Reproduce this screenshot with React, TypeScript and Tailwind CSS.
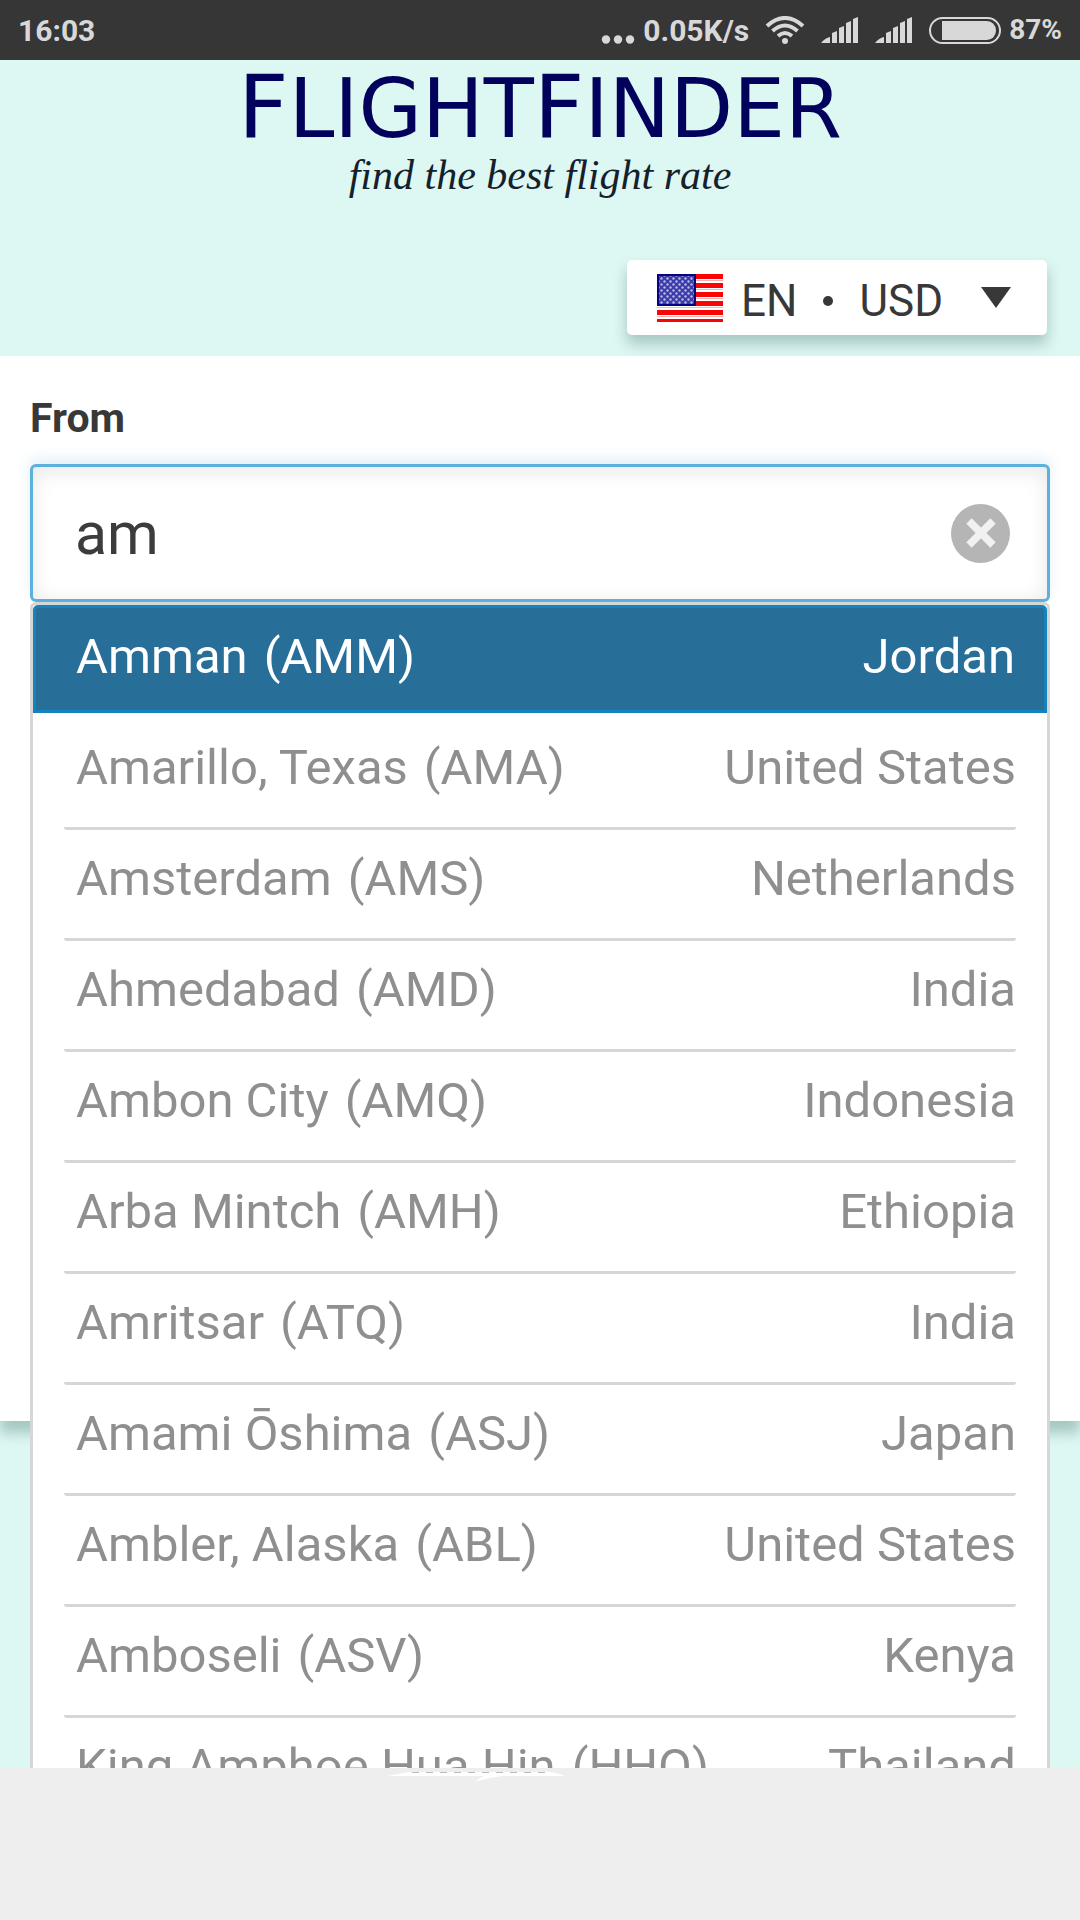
import { FC, ReactElement, useState } from "react";
import clsx from "clsx";

interface Airport {
  city: string;
  code: string;
  country: string;
}

const airports: Airport[] = [
  { city: "Amman", code: "AMM", country: "Jordan" },
  { city: "Amarillo, Texas", code: "AMA", country: "United States" },
  { city: "Amsterdam", code: "AMS", country: "Netherlands" },
  { city: "Ahmedabad", code: "AMD", country: "India" },
  { city: "Ambon City", code: "AMQ", country: "Indonesia" },
  { city: "Arba Mintch", code: "AMH", country: "Ethiopia" },
  { city: "Amritsar", code: "ATQ", country: "India" },
  { city: "Amami Ōshima", code: "ASJ", country: "Japan" },
  { city: "Ambler, Alaska", code: "ABL", country: "United States" },
  { city: "Amboseli", code: "ASV", country: "Kenya" },
  { city: "King Amphoe Hua Hin", code: "HHQ", country: "Thailand" },
];

const SignalIcon: FC = () => (
  <svg width="38" height="26" viewBox="0 0 38 26" fill="currentColor" aria-hidden="true">
    <path d="M0 26 Q4 21 9 20 V26 Z" />
    <path d="M11 26 V16 L16 14 V26 Z" />
    <path d="M18 26 V11 L23 9 V26 Z" />
    <path d="M25 26 V6 L30 4 V26 Z" />
    <path d="M32 26 V2 L37 0 V26 Z" />
  </svg>
);

const WifiIcon: FC = () => (
  <svg width="40" height="28" viewBox="0 0 40 28" fill="none" stroke="currentColor" strokeWidth="4" aria-hidden="true">
    <path d="M2 10 Q20 -6 38 10" />
    <path d="M7.500 15 Q20 4 32.500 15" />
    <path d="M13 20 Q20 14 27 20" />
    <circle cx="20" cy="25" r="3" fill="currentColor" stroke="none" />
  </svg>
);

const BatteryIcon: FC = () => (
  <svg width="72" height="27" viewBox="0 0 72 27" aria-hidden="true">
    <rect x="1" y="1" width="70" height="25" rx="12.500" fill="none" stroke="currentColor" strokeWidth="2" />
    <path d="M13 4 H58 A9 9.500 0 0 1 58 23 H13 Z" fill="currentColor" />
  </svg>
);

const StatusBar: FC = (): ReactElement => (
  <div className="flex h-[60px] items-center justify-between bg-[#363636] px-[18px] font-bold text-[#d8d8d8]">
    <span className="text-[30px]">16:03</span>
    <div className="flex items-center">
      <svg className="mt-[19px]" width="34" height="9" viewBox="0 0 34 9" fill="currentColor" aria-hidden="true">
        <circle cx="5" cy="4.500" r="4.200" />
        <circle cx="17" cy="4.500" r="4.200" />
        <circle cx="29" cy="4.500" r="4.200" />
      </svg>
      <span className="ml-2 text-[30px]">0.05K/s</span>
      <span className="ml-4 flex items-center gap-4">
        <WifiIcon />
        <SignalIcon />
        <SignalIcon />
        <BatteryIcon />
      </span>
      <span className="ml-2 text-[28px]">87%</span>
    </div>
  </div>
);

const Flag: FC = () => (
  <svg width="66" height="48" viewBox="0 0 66 48" aria-hidden="true">
    <defs>
      <pattern id="stars" width="6" height="6" patternUnits="userSpaceOnUse">
        <circle cx="1.500" cy="1.500" r="1.200" fill="#b9b9ea" />
        <circle cx="4.500" cy="4.500" r="1.200" fill="#b9b9ea" />
      </pattern>
    </defs>
    <rect width="66" height="48" fill="#fff" />
    {[0, 9, 18, 27, 36, 45].map((y) => (
      <g key={y}>
        <rect y={y} width="66" height={y === 45 ? 3 : 5} fill="#f80606" />
        <rect y={y + 6} width="66" height="1" fill="#fbb4b4" />
      </g>
    ))}
    <rect width="39" height="32" fill="#050584" />
    <rect x="2" y="2" width="35" height="28" fill="#3a3aa8" />
    <rect x="2" y="2" width="35" height="28" fill="url(#stars)" />
  </svg>
);

const Header: FC = (): ReactElement => (
  <header className="flex flex-col px-[33px] pb-[21px]">
    <div className="text-center">
      <h1 className="font-['DejaVu_Sans'] text-[82px] leading-[94px] text-[#02025c]">
        <span className="text-[88px]">F</span>LIGHT<span className="text-[88px]">F</span>INDER
      </h1>
      <p className="font-['Liberation_Serif'] text-[42px] leading-[38px] text-[#14202c] italic">find the best flight rate</p>
    </div>
    <button
      type="button"
      className="mt-[66px] flex h-[75px] items-center self-end rounded-[5px] bg-white pr-9 pl-[30px] text-[44px] text-[#383838] shadow-[0_9px_14px_rgba(0,60,50,0.25)]"
    >
      <Flag />
      <span className="ml-[18px] flex items-center pt-1.5">
        EN
        <span className="mx-[26px] size-[10px] rounded-full bg-[#383838]" />
        USD
      </span>
      <svg className="ml-[38px]" width="30" height="21" viewBox="0 0 30 21" fill="currentColor" aria-hidden="true">
        <path d="M0 0 H30 L15 21 Z" />
      </svg>
    </button>
  </header>
);

interface OptionProps {
  airport: Airport;
  active: boolean;
  onSelect: () => void;
}

const Option: FC<OptionProps> = ({ airport, active, onSelect }): ReactElement => (
  <li className={clsx(active ? "mb-[6px]" : "px-[31px]")}>
    <button
      type="button"
      onClick={onSelect}
      className={clsx(
        "flex w-full justify-between text-[49px] leading-[98px] whitespace-nowrap",
        active
          ? "rounded-t-[5px] border-3 border-[#1583bd] bg-[#276f99] pr-[29px] pb-1 pl-10 text-white"
          : "rounded-[3px] border-b-3 border-[#d6d6d6] pb-[10px] pl-3 text-[#8f8f8f]",
      )}
    >
      <span className="flex gap-4">
        <span>{airport.city}</span>
        <span>({airport.code})</span>
      </span>
      <span>{airport.country}</span>
    </button>
  </li>
);

const Keyboard: FC = () => (
  <div className="relative z-10 h-[152px] shrink-0 bg-[#eeeeee]">
    <svg className="mx-auto" width="304" height="16" viewBox="388 0 304 16" aria-hidden="true">
      <path d="M388 8 Q404 4 420 3 H540 Q556 4 565 8 H503 Q490 9 475 14 Q479 10 484 8 Z" fill="#fff" />
      <path d="M410 2 H545 V4 H410 Z" fill="#eeeeee" />
      <path d="M412 4.500 H552" stroke="#bcbcbc" strokeWidth="1" strokeDasharray="7 7" />
    </svg>
  </div>
);

export default function App() {
  const [query, setQuery] = useState("am");
  const [selected, setSelected] = useState(0);

  return (
    <div className="flex h-screen flex-col bg-[#ddf7f3] font-['Roboto',sans-serif]">
      <div className="min-h-0 flex-1 overflow-hidden">
        <StatusBar />
        <Header />
        <main className="min-h-[1065px] bg-white px-[30px] pt-[38px] shadow-[0_12px_12px_rgba(0,60,50,0.25)]">
          <label htmlFor="from" className="mb-[22px] block text-[41px] leading-12 font-bold text-[#383838]">
            From
          </label>
          <div className="relative">
            <input
              id="from"
              type="text"
              autoComplete="off"
              value={query}
              onChange={(e) => setQuery(e.target.value)}
              className="block h-[138px] w-full rounded-md border-3 border-[#5bb0dc] bg-white pr-32 pl-[42px] text-[59px] text-[#3c3c3c] shadow-[0_-6px_14px_rgba(120,180,230,0.2),inset_0_4px_20px_rgba(0,20,10,0.1)] outline-none"
            />
            <button
              type="button"
              aria-label="Clear"
              onClick={() => setQuery("")}
              className="absolute inset-y-0 right-10 my-auto flex size-[59px] items-center justify-center rounded-full bg-[#b5b5b5]"
            >
              <svg width="30" height="30" viewBox="0 0 30 30" stroke="#f1f1f1" strokeWidth="7.500" aria-hidden="true">
                <path d="M3 3 L27 27 M27 3 L3 27" />
              </svg>
            </button>
            <ul className="absolute inset-x-0 top-full rounded-t-md border-3 border-[#d6d6d6] bg-white">
              {airports.map((airport, i) => (
                <Option key={airport.code} airport={airport} active={i === selected} onSelect={() => setSelected(i)} />
              ))}
            </ul>
          </div>
        </main>
      </div>
      <Keyboard />
    </div>
  );
}
